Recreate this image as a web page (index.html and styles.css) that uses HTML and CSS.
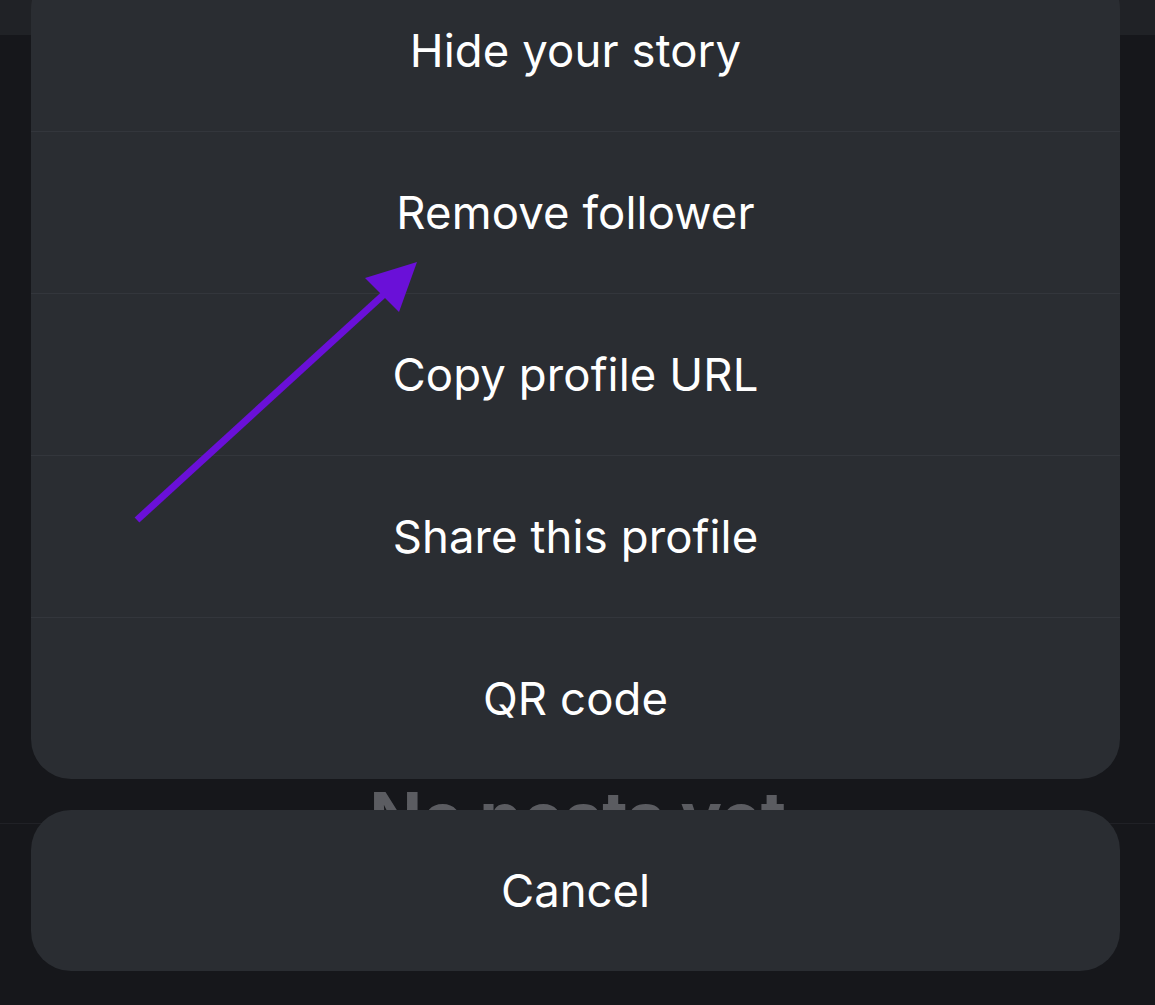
FILE: index.html
```html
<!DOCTYPE html>
<html lang="en">
<head>
<meta charset="utf-8">
<title>Action sheet</title>
<link rel="stylesheet" href="styles.css">
</head>
<body>
<div class="screen">
  <div class="backdrop">
    <div class="topbar"></div>
    <div class="profile-body">
      <h2 class="empty-title">No posts yet</h2>
      <div class="divider"></div>
    </div>
  </div>

  <div class="sheet">
    <div class="sheet-item">Hide your story</div>
    <div class="sheet-item">Remove follower</div>
    <div class="sheet-item">Copy profile URL</div>
    <div class="sheet-item">Share this profile</div>
    <div class="sheet-item">QR code</div>
  </div>

  <div class="cancel">Cancel</div>

  <svg class="arrow" width="1155" height="1005" viewBox="0 0 1155 1005" aria-hidden="true">
    <line x1="137" y1="520" x2="392" y2="287" stroke="#6a10d8" stroke-width="7" stroke-linecap="butt"/>
    <polygon points="417,262 365,278 399,312" fill="#6a10d8"/>
  </svg>
</div>
</body>
</html>
```

FILE: styles.css
```css
html, body {
  margin: 0;
  padding: 0;
}

body {
  background: #16171b;
  font-family: Inter, "Noto Sans", "Liberation Sans", sans-serif;
  color: #ffffff;
}

.screen {
  position: relative;
  width: 1155px;
  height: 1005px;
  overflow: hidden;
  background: #16171b;
}

.backdrop {
  display: flex;
  flex-direction: column;
  height: 100%;
}

.topbar {
  height: 35px;
  background: #202226;
}

.profile-body {
  display: flex;
  flex-direction: column;
  align-items: center;
  padding-top: 745px;
}

.empty-title {
  margin: 0;
  font-size: 69px;
  font-weight: 700;
  line-height: 74px;
  color: #5b5c61;
  letter-spacing: -0.5px;
}

.divider {
  align-self: stretch;
  height: 1px;
  margin-top: -31px;
  background: #202126;
}

.sheet {
  position: absolute;
  left: 31px;
  right: 35px;
  top: -31px;
  background: #2a2d32;
  border-radius: 40px;
  display: flex;
  flex-direction: column;
  overflow: hidden;
}

.sheet-item {
  height: 162px;
  box-sizing: border-box;
  display: flex;
  align-items: center;
  justify-content: center;
  font-size: 45.5px;
  font-weight: 400;
  letter-spacing: 0.1px;
}

.sheet-item + .sheet-item {
  border-top: 1px solid #33363c;
}

.cancel {
  position: absolute;
  left: 31px;
  right: 35px;
  top: 810px;
  height: 161px;
  background: #2a2d32;
  border-radius: 40px;
  display: flex;
  align-items: center;
  justify-content: center;
  font-size: 45.5px;
  font-weight: 400;
}

.arrow {
  position: absolute;
  left: 0;
  top: 0;
  pointer-events: none;
}
```
